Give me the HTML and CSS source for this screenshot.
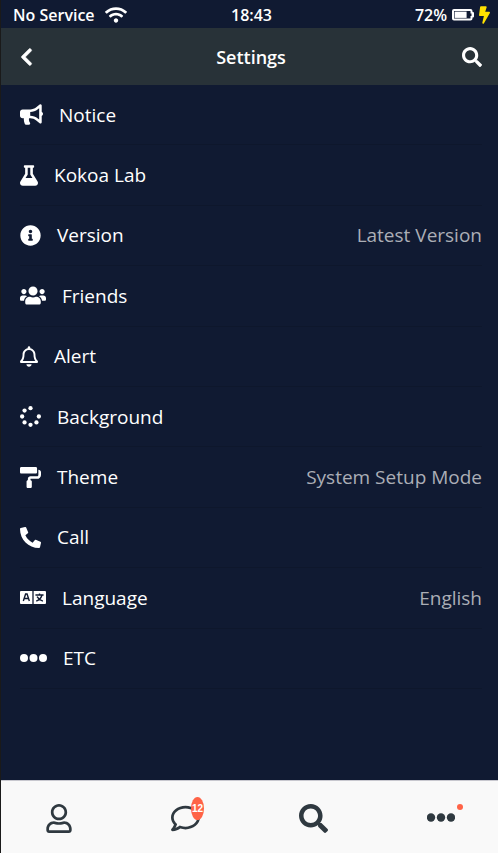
FILE: index.html
```html
<!DOCTYPE html>
<html lang="en">
<head>
<meta charset="utf-8">
<meta name="viewport" content="width=device-width, initial-scale=1">
<title>Settings</title>
<link rel="stylesheet" href="styles.css">
</head>
<body>
<div class="status-bar">
  <div class="status-side">
    <span>No Service</span>
    <svg class="wifi" viewBox="0 0 640 512" aria-hidden="true"><path d="M634.91 154.88C457.74-8.99 182.19-8.93 5.09 154.88c-6.66 6.16-6.79 16.59-.35 22.98l34.24 33.97c6.14 6.1 16.02 6.23 22.4.38 145.92-133.68 371.3-133.71 517.25 0 6.38 5.85 16.26 5.71 22.4-.38l34.24-33.97c6.43-6.39 6.3-16.82-.36-22.98zM320 352c-35.35 0-64 28.65-64 64s28.65 64 64 64 64-28.65 64-64-28.65-64-64-64zm202.67-83.59c-115.26-101.93-290.21-101.82-405.34 0-6.9 6.1-7.12 16.69-.57 23.15l34.44 33.99c6 5.92 15.66 6.32 22.05.8 83.95-72.57 209.74-72.41 293.49 0 6.39 5.52 16.05 5.13 22.05-.8l34.44-33.99c6.56-6.46 6.33-17.06-.56-23.15z"/></svg>
  </div>
  <span>18:43</span>
  <div class="status-side status-right">
    <span>72%</span>
    <svg class="battery" viewBox="0 0 22 12" aria-hidden="true"><path fill-rule="evenodd" d="M2 0h16.500a2 2 0 0 1 2 2v1h.5a1 1 0 0 1 1 1v3.500a1 1 0 0 1-1 1h-.5v1a2 2 0 0 1-2 2H2a2 2 0 0 1-2-2V2a2 2 0 0 1 2-2zM2 2v7.500h16.500V7H19.500V4.500h-1V2z"/><path d="M2.600 2.600h12v6.300h-12z"/></svg>
    <svg class="bolt" viewBox="0 0 320 512" aria-hidden="true"><path d="M296 160H180.600l42.600-129.800C227.200 15 215.700 0 200 0H56C44 0 33.800 8.900 32.200 20.800l-32 240C-1.700 275.200 9.500 288 24 288h118.700L96.600 482.500c-3.600 15.200 8 29.500 23.300 29.500 8.400 0 16.400-4.400 20.800-12l176-304c9.300-15.900-2.200-36-20.700-36z"/></svg>
  </div>
</div>
<header class="header">
  <button class="icon-button" type="button" aria-label="Back"><svg class="back" viewBox="0 0 320 512"><path d="M34.52 239.03L228.87 44.69c9.37-9.37 24.57-9.37 33.94 0l22.67 22.67c9.36 9.36 9.37 24.52.04 33.9L131.49 256l154.02 154.75c9.34 9.38 9.32 24.54-.04 33.9l-22.67 22.67c-9.37 9.37-24.57 9.37-33.94 0L34.52 272.97c-9.37-9.37-9.37-24.57 0-33.94z"/></svg></button>
  <h1>Settings</h1>
  <button class="icon-button end" type="button" aria-label="Search"><svg class="find" viewBox="0 0 512 512"><path d="M505 442.700L405.300 343c-4.500-4.500-10.600-7-17-7H372c27.600-35.300 44-79.700 44-128C416 93.100 322.900 0 208 0S0 93.100 0 208s93.100 208 208 208c48.300 0 92.700-16.400 128-44v16.300c0 6.400 2.500 12.500 7 17l99.700 99.700c9.400 9.400 24.600 9.400 33.900 0l28.300-28.300c9.400-9.400 9.400-24.600.1-34zM208 336c-70.700 0-128-57.200-128-128 0-70.700 57.200-128 128-128 70.700 0 128 57.200 128 128 0 70.700-57.200 128-128 128z"/></svg></button>
</header>
<main class="main">
  <ul class="settings">
    <li><a href="#"><svg class="w-lg" viewBox="0 0 576 512"><path d="M576 240c0-23.630-12.950-44.040-32-55.120V32.010C544 23.260 537.020 0 512 0c-7.120 0-14.190 2.380-19.980 7.020l-85.030 68.030C364.280 109.190 310.660 128 256 128H64c-35.350 0-64 28.650-64 64v96c0 35.350 28.650 64 64 64h33.700c-1.390 10.480-2.180 21.140-2.180 32 0 39.770 9.260 77.350 25.560 110.940 5.190 10.690 16.520 17.060 28.400 17.060h74.280c26.050 0 41.690-29.840 25.900-50.560-16.400-21.520-26.150-48.360-26.150-77.440 0-11.110 1.620-21.790 4.410-32H256c54.660 0 108.280 18.810 150.980 52.950l85.030 68.030a32.023 32.023 0 0 0 19.980 7.020c24.920 0 32-22.780 32-32V295.130C563.050 284.040 576 263.630 576 240zm-96 141.420l-33.050-26.440C392.950 311.780 325.120 288 256 288v-96c69.120 0 136.950-23.780 190.950-66.980L480 98.580v282.840z"/></svg><span>Notice</span></a></li>
    <li><a href="#"><svg class="w-sm" viewBox="0 0 448 512"><path d="M437.200 403.500L320 215V64h8c13.300 0 24-10.700 24-24V24c0-13.300-10.700-24-24-24H120c-13.300 0-24 10.700-24 24v16c0 13.300 10.700 24 24 24h8v151L10.800 403.500C-18.500 450.600 15.300 512 70.900 512h306.200c55.700 0 89.400-61.500 60.100-108.500zM137.900 320l48.200-77.600c3.700-5.200 5.800-11.600 5.800-18.400V64h64v160c0 6.900 2.200 13.200 5.800 18.400l48.200 77.600h-172z"/></svg><span>Kokoa Lab</span></a></li>
    <li><a href="#"><svg class="w-md" viewBox="0 0 512 512"><path d="M256 8C119.043 8 8 119.083 8 256c0 136.997 111.043 248 248 248s248-111.003 248-248C504 119.083 392.957 8 256 8zm0 110c23.196 0 42 18.804 42 42s-18.804 42-42 42-42-18.804-42-42 18.804-42 42-42zm56 254c0 6.627-5.373 12-12 12h-88c-6.627 0-12-5.373-12-12v-24c0-6.627 5.373-12 12-12h12v-64h-12c-6.627 0-12-5.373-12-12v-24c0-6.627 5.373-12 12-12h64c6.627 0 12 5.373 12 12v100h12c6.627 0 12 5.373 12 12v24z"/></svg><span>Version</span><span class="value">Latest Version</span></a></li>
    <li><a href="#"><svg class="w-xl" viewBox="0 0 640 512"><path d="M96 224c35.300 0 64-28.700 64-64s-28.700-64-64-64-64 28.700-64 64 28.700 64 64 64zm448 0c35.300 0 64-28.700 64-64s-28.700-64-64-64-64 28.700-64 64 28.700 64 64 64zm32 32h-64c-17.600 0-33.500 7.100-45.100 18.600 40.300 22.100 68.900 62 75.100 109.400h66c17.700 0 32-14.300 32-32v-32c0-35.300-28.700-64-64-64zm-256 0c61.900 0 112-50.100 112-112S381.900 32 320 32 208 82.100 208 144s50.100 112 112 112zm76.800 32h-8.300c-20.800 10-43.900 16-68.500 16s-47.600-6-68.500-16h-8.300C179.600 288 128 339.600 128 403.200V432c0 26.500 21.500 48 48 48h288c26.500 0 48-21.500 48-48v-28.800c0-63.600-51.600-115.200-115.200-115.200zm-223.700-13.400C161.500 263.100 145.600 256 128 256H64c-35.300 0-64 28.700-64 64v32c0 17.700 14.300 32 32 32h65.900c6.300-47.400 34.900-87.300 75.200-109.400z"/></svg><span>Friends</span></a></li>
    <li><a href="#"><svg class="w-sm" viewBox="0 0 448 512"><path d="M439.390 362.290c-19.320-20.760-55.470-51.990-55.470-154.290 0-77.700-54.480-139.900-127.940-155.160V32c0-17.670-14.320-32-31.980-32s-31.980 14.330-31.980 32v20.840C118.560 68.100 64.080 130.300 64.080 208c0 102.300-36.150 133.530-55.470 154.290-6 6.450-8.660 14.160-8.610 21.710.11 16.400 12.980 32 32.100 32h383.800c19.120 0 32-15.600 32.100-32 .05-7.550-2.610-15.270-8.610-21.710zM67.530 368c21.220-27.970 44.420-74.330 44.530-159.420 0-.2-.06-.38-.06-.58 0-61.860 50.140-112 112-112s112 50.140 112 112c0 .2-.06.38-.06.58.11 85.100 23.310 131.460 44.530 159.420H67.530zM224 512c35.320 0 63.970-28.650 63.970-64H160.030c0 35.350 28.650 64 63.970 64z"/></svg><span>Alert</span></a></li>
    <li><a href="#"><svg class="w-md" viewBox="0 0 512 512"><circle cx="256" cy="52" r="52"/><circle cx="256" cy="460" r="52"/><circle cx="460" cy="256" r="52"/><circle cx="52" cy="256" r="52"/><circle cx="111" cy="401" r="52"/><circle cx="401" cy="401" r="52"/><circle cx="111" cy="111" r="52"/></svg><span>Background</span></a></li>
    <li><a href="#"><svg class="w-md" viewBox="0 0 512 512"><path d="M416 128V32c0-17.670-14.330-32-32-32H32C14.330 0 0 14.330 0 32v96c0 17.670 14.330 32 32 32h352c17.670 0 32-14.330 32-32zm32-64v128c0 17.670-14.330 32-32 32H256c-35.350 0-64 28.650-64 64v32c-17.670 0-32 14.330-32 32v128c0 17.670 14.330 32 32 32h64c17.670 0 32-14.330 32-32V352c0-17.670-14.330-32-32-32v-32h160c53.020 0 96-42.980 96-96v-64c0-35.350-28.650-64-64-64z"/></svg><span>Theme</span><span class="value">System Setup Mode</span></a></li>
    <li><a href="#"><svg class="w-md" viewBox="0 0 512 512"><path d="M497.390 361.800l-112-48a24 24 0 0 0-28 6.900l-49.600 60.600A370.660 370.660 0 0 1 130.600 204.110l60.600-49.600a23.940 23.940 0 0 0 6.900-28l-48-112A24.160 24.160 0 0 0 122.600.61l-104 24A24 24 0 0 0 0 48c0 256.500 207.900 464 464 464a24 24 0 0 0 23.400-18.600l24-104a24.290 24.290 0 0 0-14.010-27.600z"/></svg><span>Call</span></a></li>
    <li><a href="#"><svg class="w-xl" viewBox="0 0 640 512"><path fill-rule="evenodd" d="M24 96h280v320H24a24 24 0 0 1-24-24V120a24 24 0 0 1 24-24zM336 96h280a24 24 0 0 1 24 24v272a24 24 0 0 1-24 24H336z"/><path class="cut" d="M82 342l56-172h36l56 172M106 280h100M380 196h200M480 156v40M540 200c-20 66-70 118-140 146M420 236c30 54 78 92 144 110"/></svg><span>Language</span><span class="value">English</span></a></li>
    <li><a href="#"><svg class="w-dots" viewBox="0 0 27 21"><circle cx="4" cy="10" r="4"/><circle cx="13.500" cy="10" r="4"/><circle cx="23" cy="10" r="4"/></svg><span>ETC</span></a></li>
  </ul>
</main>
<nav class="tabs">
  <a href="#" aria-label="Friends"><svg class="tab-user" viewBox="0 0 448 512"><path d="M313.600 304c-28.700 0-42.500 16-89.600 16-47.100 0-60.800-16-89.600-16C60.200 304 0 364.200 0 438.400V464c0 26.500 21.500 48 48 48h352c26.500 0 48-21.500 48-48v-25.600c0-74.200-60.200-134.400-134.400-134.400zM400 464H48v-25.600c0-47.600 38.800-86.400 86.400-86.400 14.600 0 38.300 16 89.600 16 51.700 0 74.900-16 89.600-16 47.600 0 86.400 38.800 86.400 86.400V464zM224 288c79.500 0 144-64.500 144-144S303.500 0 224 0 80 64.500 80 144s64.500 144 144 144zm0-240c52.900 0 96 43.100 96 96s-43.100 96-96 96-96-43.100-96-96 43.100-96 96-96z"/></svg></a>
  <a href="#" aria-label="Chats"><svg class="tab-icon" viewBox="0 0 512 512"><path d="M256 32C114.600 32 0 125.100 0 240c0 47.600 19.900 91.200 52.900 126.300C38 405.700 7 439.100 6.500 439.500c-6.600 7-8.400 17.200-4.600 26S14.400 480 24 480c61.500 0 110-25.700 139.100-46.300C192 442.800 223.200 448 256 448c141.400 0 256-93.100 256-208S397.400 32 256 32zm0 368c-26.700 0-53.100-4.100-78.400-12.100l-22.700-7.200-19.500 13.800c-14.300 10.100-33.900 21.400-57.500 29 7.300-12.100 14.400-25.700 19.900-40.200l10.600-28.100-20.600-21.800C69.700 314.100 48 282.200 48 240c0-88.200 93.300-160 208-160s208 71.800 208 160-93.300 160-208 160z"/></svg><span class="badge">12</span></a>
  <a href="#" aria-label="Find"><svg class="tab-icon" viewBox="0 0 512 512"><path d="M505 442.700L405.300 343c-4.500-4.500-10.600-7-17-7H372c27.600-35.300 44-79.700 44-128C416 93.100 322.900 0 208 0S0 93.100 0 208s93.100 208 208 208c48.300 0 92.700-16.400 128-44v16.300c0 6.400 2.500 12.500 7 17l99.700 99.700c9.400 9.400 24.600 9.400 33.900 0l28.300-28.300c9.400-9.400 9.400-24.600.1-34zM208 336c-70.700 0-128-57.200-128-128 0-70.700 57.200-128 128-128 70.700 0 128 57.200 128 128 0 70.700-57.200 128-128 128z"/></svg></a>
  <a href="#" aria-label="More"><svg class="tab-more" viewBox="0 0 28 28"><circle cx="4" cy="13.500" r="4.200"/><circle cx="14" cy="13.500" r="4.200"/><circle cx="24" cy="13.500" r="4.200"/></svg><span class="dot"></span></a>
</nav>
</body>
</html>
```
FILE: styles.css
```css
* {
  box-sizing: border-box;
}

body {
  margin: 0;
  min-height: 100vh;
  display: flex;
  flex-direction: column;
  border-left: 1px solid #1a1a1a;
  background: #101a32;
  color: #fff;
  font-family: "Open Sans", "Noto Sans", sans-serif;
  font-size: 19px;
}

svg {
  display: block;
  flex: none;
  fill: currentColor;
}

a {
  color: inherit;
  text-decoration: none;
}

.status-bar {
  display: flex;
  align-items: center;
  height: 28px;
  padding: 1px 8px 0 12px;
  font-size: 16px;
  font-weight: 600;
}

.status-side {
  flex: 1;
  display: flex;
  align-items: center;
  gap: 10px;
}

.status-right {
  justify-content: flex-end;
  gap: 5px;
}

.wifi {
  width: 22px;
  height: 18px;
}

.battery {
  width: 22px;
  height: 12px;
}

.bolt {
  width: 11px;
  height: 18px;
  color: #ffe100;
}

.header {
  display: grid;
  grid-template-columns: 1fr auto 1fr;
  align-items: center;
  height: 57px;
  padding: 0 16px 0 19px;
  background: #283238;
}

.header h1 {
  margin: 0;
  font-size: 18px;
  font-weight: 600;
}

.icon-button {
  justify-self: start;
  padding: 0;
  border: 0;
  background: none;
  color: inherit;
}

.end {
  justify-self: end;
}

.back {
  width: 13px;
  height: 20px;
  stroke: currentColor;
  stroke-width: 12px;
}

.find {
  width: 20px;
  height: 20px;
}

.main {
  flex: 1;
  display: flex;
  padding: 0 16px 91px 19px;
}

.settings {
  flex: 1;
  display: grid;
  grid-auto-rows: 1fr;
  margin: 0;
  padding: 0;
  list-style: none;
}

.settings li {
  display: grid;
  border-bottom: 1px solid #0e172c;
}

.settings a {
  display: flex;
  align-items: center;
  gap: 16px;
}

.settings svg {
  height: 21px;
}

.w-sm {
  width: 18px;
}

.w-md {
  width: 21px;
}

.w-lg {
  width: 23px;
}

.w-xl {
  width: 26px;
}

.w-dots {
  width: 27px;
}

.cut {
  fill: none;
  stroke: #101a32;
  stroke-width: 34;
}

.value {
  margin-left: auto;
  color: #abaeb6;
}

.tabs {
  display: flex;
  justify-content: space-between;
  align-items: center;
  height: 73px;
  padding: 2px 43px 0 45px;
  border-top: 1px solid #c8c8cf;
  background: #f9f9f9;
  color: #2f3940;
}

.tabs a {
  position: relative;
}

.tab-user {
  width: 26px;
  height: 29px;
}

.tab-icon {
  width: 29px;
  height: 29px;
}

.tab-more {
  width: 28px;
  height: 28px;
}

.badge {
  position: absolute;
  top: -7px;
  right: -4px;
  width: 13px;
  height: 23px;
  border-radius: 50%;
  background: #ff6347;
  color: #fff;
  font-family: "Liberation Sans Narrow", "Liberation Sans", sans-serif;
  font-size: 10px;
  font-weight: 600;
  line-height: 23px;
  text-align: center;
}

.dot {
  position: absolute;
  top: 0;
  right: -8px;
  width: 6px;
  height: 6px;
  border-radius: 50%;
  background: #ff6347;
}
```
